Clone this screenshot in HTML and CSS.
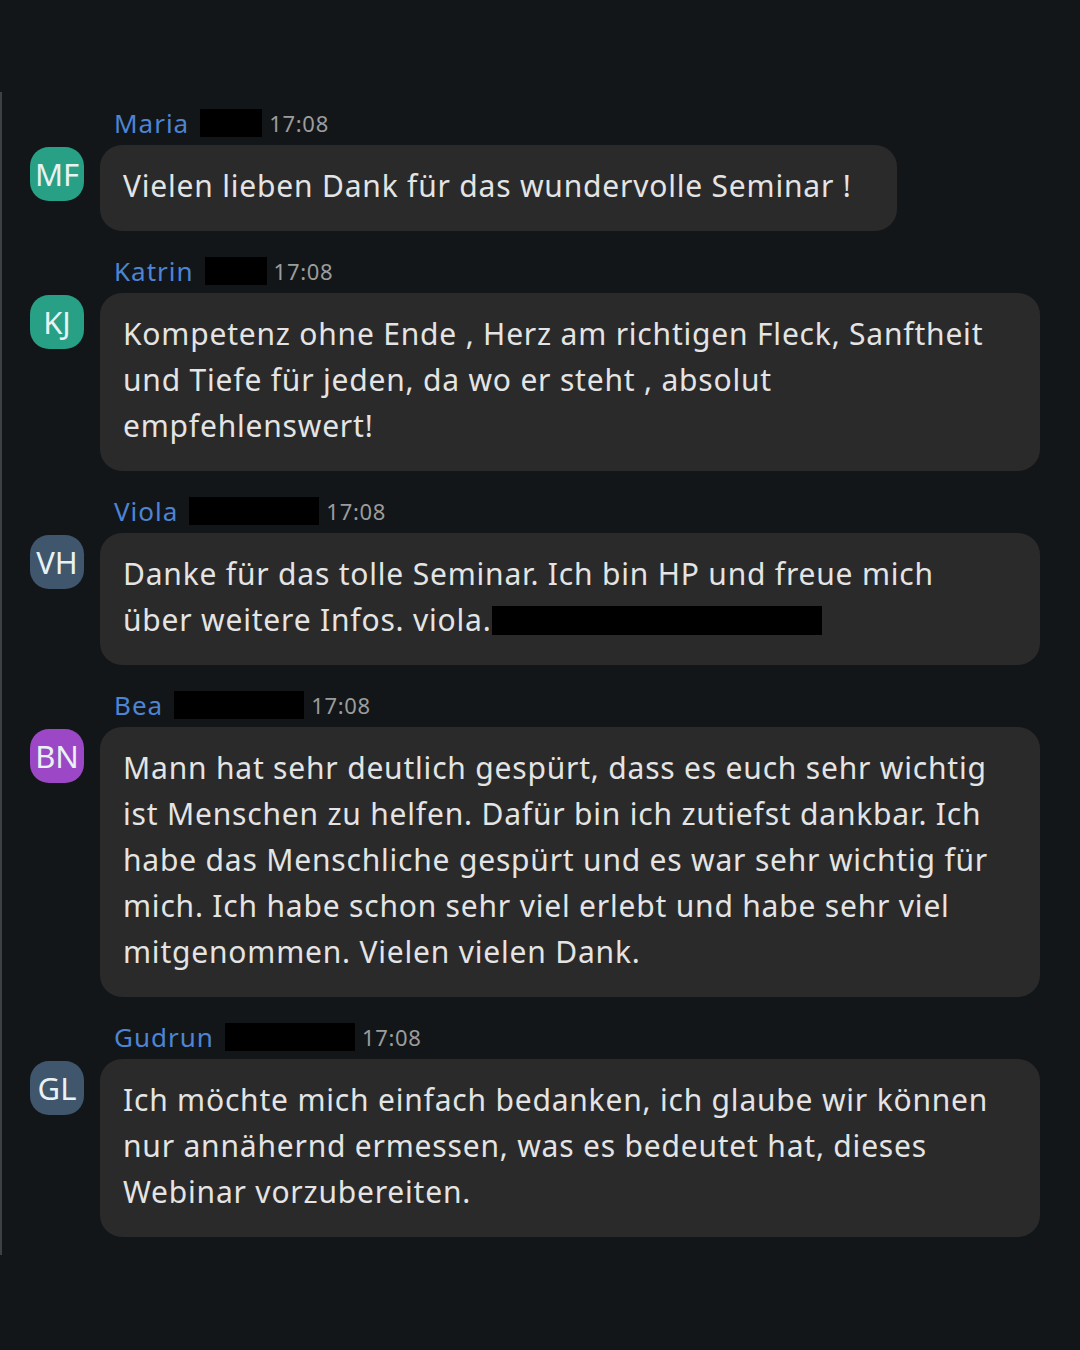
FILE: index.html
```html
<!DOCTYPE html>
<html lang="de">
<head>
<meta charset="utf-8">
<title>Chat</title>
<link rel="stylesheet" href="styles.css">
</head>
<body>
<div class="chat">
  <div class="msg">
    <div class="avatar av-teal">MF</div>
    <div class="body">
      <div class="head"><span class="name">Maria</span><span class="redact" style="width:62px"></span><span class="time">17:08</span></div>
      <div class="bubble fit">Vielen lieben Dank für das wundervolle Seminar !</div>
    </div>
  </div>
  <div class="msg">
    <div class="avatar av-teal">KJ</div>
    <div class="body">
      <div class="head"><span class="name">Katrin</span><span class="redact" style="width:62px"></span><span class="time">17:08</span></div>
      <div class="bubble">Kompetenz ohne Ende , Herz am richtigen Fleck, Sanftheit<br>und Tiefe für jeden, da wo er steht , absolut<br>empfehlenswert!</div>
    </div>
  </div>
  <div class="msg">
    <div class="avatar av-slate">VH</div>
    <div class="body">
      <div class="head"><span class="name">Viola</span><span class="redact" style="width:130px"></span><span class="time">17:08</span></div>
      <div class="bubble">Danke für das tolle Seminar. Ich bin HP und freue mich<br>über weitere Infos. viola.<span class="redact-inline"></span></div>
    </div>
  </div>
  <div class="msg">
    <div class="avatar av-purple">BN</div>
    <div class="body">
      <div class="head"><span class="name">Bea</span><span class="redact" style="width:130px"></span><span class="time">17:08</span></div>
      <div class="bubble">Mann hat sehr deutlich gespürt, dass es euch sehr wichtig<br>ist Menschen zu helfen. Dafür bin ich zutiefst dankbar. Ich<br>habe das Menschliche gespürt und es war sehr wichtig für<br>mich. Ich habe schon sehr viel erlebt und habe sehr viel<br>mitgenommen. Vielen vielen Dank.</div>
    </div>
  </div>
  <div class="msg">
    <div class="avatar av-slate">GL</div>
    <div class="body">
      <div class="head"><span class="name">Gudrun</span><span class="redact" style="width:130px"></span><span class="time">17:08</span></div>
      <div class="bubble">Ich möchte mich einfach bedanken, ich glaube wir können<br>nur annähernd ermessen, was es bedeutet hat, dieses<br>Webinar vorzubereiten.</div>
    </div>
  </div>
</div>
</body>
</html>
```
FILE: styles.css
```css
html, body {
  margin: 0;
  padding: 0;
}
body {
  background: #131619;
  width: 1080px;
  height: 1350px;
  font-family: "Noto Sans", "Open Sans", sans-serif;
  color: #e4e4e4;
  overflow: hidden;
}
.chat {
  margin-top: 92px;
  height: 1163px;
  box-sizing: border-box;
  border-left: 2px solid #3e4043;
  padding: 16px 40px 0 28px;
  display: flex;
  flex-direction: column;
  gap: 25px;
}
.msg {
  display: flex;
  gap: 16px;
  align-items: flex-start;
}
.avatar {
  flex: none;
  width: 54px;
  height: 54px;
  margin-top: 39px;
  border-radius: 19px;
  display: flex;
  align-items: center;
  justify-content: center;
  font-size: 31px;
  color: #e9f2f2;
  letter-spacing: 0;
}
.av-teal { background: #27a085; }
.av-slate { background: #3f566d; }
.av-purple { background: #9c48c6; }
.body {
  flex: 1;
  display: flex;
  flex-direction: column;
  align-items: flex-start;
}
.head {
  height: 30px;
  margin-bottom: 7px;
  padding-left: 14px;
  display: flex;
  align-items: center;
}
.name {
  color: #4d84d4;
  font-size: 26px;
  letter-spacing: 1px;
  margin-right: 11px;
}
.redact {
  display: inline-block;
  height: 28px;
  background: #000;
  margin-right: 7px;
}
.time {
  color: #9c9c9c;
  font-size: 22px;
  letter-spacing: 0.7px;
}
.bubble {
  box-sizing: border-box;
  width: 940px;
  background: #2a2a2a;
  border-radius: 22px;
  padding: 18px 20px 22px 23px;
  font-size: 30px;
  letter-spacing: 0.8px;
  line-height: 46px;
  white-space: nowrap;
}
.bubble.fit {
  width: auto;
  padding-right: 45px;
}
.redact-inline {
  display: inline-block;
  width: 330px;
  height: 29px;
  background: #000;
  vertical-align: -4px;
}
```
